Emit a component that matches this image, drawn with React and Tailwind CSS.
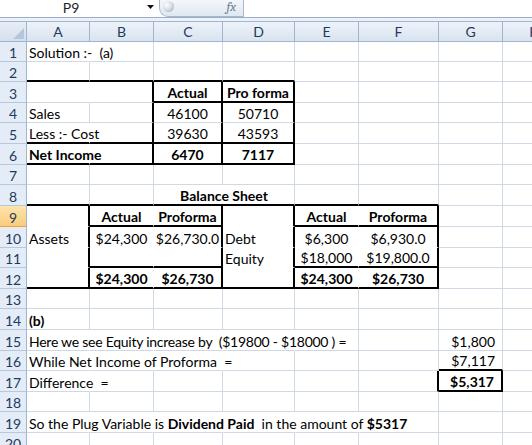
import React from "react";

const cols = [
  { k: "A", w: "w-[63px]", h: "A" },
  { k: "B", w: "w-[64px]", h: "B" },
  { k: "C", w: "w-[69px]", h: "C" },
  { k: "D", w: "w-[72px]", h: "D" },
  { k: "E", w: "w-[64px]", h: "E" },
  { k: "F", w: "w-[80px]", h: "F" },
  { k: "G", w: "w-[64px]", h: "G" },
  { k: "H", w: "w-[64px]", h: "H" },
];

// R / B: "x" = thick black, "n" = gridline hidden
const rows = [
  { n: 1, h: 20, c: { A: { t: "Solution :-  (a)", R: "n" } } },
  { n: 2, h: 20, c: { A: { B: "x" }, B: { B: "x" }, C: { B: "x" }, D: { B: "x" } } },
  { n: 3, h: 21, c: { A: { R: "n" }, B: { R: "x" }, C: { t: "Actual", b: 1, al: "c", R: "x", B: "x" }, D: { t: "Pro forma", b: 1, al: "c", R: "x", B: "x" } } },
  { n: 4, h: 20, c: { A: { t: "Sales" }, B: { R: "x" }, C: { t: "46100", al: "c", R: "x" }, D: { t: "50710", al: "c", R: "x" } } },
  { n: 5, h: 21, c: { A: { t: "Less :- Cost", R: "n", B: "x" }, B: { R: "x", B: "x" }, C: { t: "39630", al: "c", R: "x", B: "x" }, D: { t: "43593", al: "c", R: "x", B: "x" } } },
  { n: 6, h: 21, c: { A: { t: "Net Income", b: 1, R: "n", B: "x" }, B: { R: "x", B: "x" }, C: { t: "6470", b: 1, al: "c", R: "x", B: "x" }, D: { t: "7117", b: 1, al: "c", R: "x", B: "x" } } },
  { n: 7, h: 20, c: {} },
  { n: 8, h: 21, c: { A: { B: "x" }, B: { B: "x" }, C: { t: "Balance Sheet", b: 1, al: "c", merge: 1, B: "x" }, E: { B: "x" }, F: { B: "x" } } },
  { n: 9, h: 21, sel: 1, c: { A: { R: "x", B: "n" }, B: { t: "Actual", b: 1, al: "c", R: "n", B: "x" }, C: { t: "Proforma", b: 1, al: "c", R: "x", B: "x" }, D: { R: "x", B: "n" }, E: { t: "Actual", b: 1, al: "c", R: "n", B: "x" }, F: { t: "Proforma", b: 1, al: "c", R: "x", B: "x" } } },
  { n: 10, h: 21, c: { A: { t: "Assets", R: "x", B: "n" }, B: { t: "$24,300", al: "c", R: "n", B: "n" }, C: { t: "$26,730.0", al: "c", R: "x", B: "n" }, D: { t: "Debt", R: "x", B: "n" }, E: { t: "$6,300", al: "c", R: "n", B: "n" }, F: { t: "$6,930.0", al: "c", R: "x", B: "n" } } },
  { n: 11, h: 20, c: { A: { R: "x", B: "n" }, B: { R: "n", B: "x" }, C: { R: "x", B: "x" }, D: { t: "Equity", R: "x", B: "n" }, E: { t: "$18,000", al: "c", R: "n", B: "x" }, F: { t: "$19,800.0", al: "c", R: "x", B: "x" } } },
  { n: 12, h: 21, c: { A: { R: "x", B: "x" }, B: { t: "$24,300", b: 1, al: "c", R: "n", B: "x" }, C: { t: "$26,730", b: 1, al: "c", R: "x", B: "x" }, D: { R: "x", B: "x" }, E: { t: "$24,300", b: 1, al: "c", R: "n", B: "x" }, F: { t: "$26,730", b: 1, al: "c", R: "x", B: "x" } } },
  { n: 13, h: 20, c: {} },
  { n: 14, h: 21, c: { A: { t: "(b)", b: 1 } } },
  { n: 15, h: 21, c: { A: { t: "Here we see Equity increase by  ($19800 - $18000 ) =", R: "n", tight: 1 }, B: { R: "n" }, C: { R: "n" }, D: { R: "n" }, G: { t: "$1,800", al: "r" } } },
  { n: 16, h: 20, c: { A: { t: "While Net Income of Proforma  =", R: "n" }, B: { R: "n" }, C: { R: "n" }, G: { t: "$7,117", al: "r", B: "x" } } },
  { n: 17, h: 21, c: { A: { t: "Difference  =", R: "n" }, F: { R: "x" }, G: { t: "$5,317", b: 1, al: "r", R: "x", B: "x" } } },
  { n: 18, h: 20, c: {} },
  {
    n: 19,
    h: 21,
    c: {
      A: {
        t: (
          <>
            So the Plug Variable is <b>Dividend Paid</b>
            {"  in the amount of "}
            <b>$5317</b>
          </>
        ),
        R: "n",
      },
      B: { R: "n" },
      C: { R: "n" },
      D: { R: "n" },
      E: { R: "n" },
    },
  },
  { n: 20, h: 20, c: {} },
];

function Cell({ col, s }) {
  const right =
    s.R === "x"
      ? "border-r-2 border-r-black"
      : s.R === "n"
      ? "border-r border-r-transparent"
      : "border-r border-r-[#d0d7e5]";
  const bottom =
    s.B === "x"
      ? "border-b-2 border-b-black"
      : s.B === "n"
      ? "border-b border-b-transparent"
      : "border-b border-b-[#d0d7e5]";
  const align =
    s.al === "c" ? "justify-center" : s.al === "r" ? "justify-end pr-[7px]" : "justify-start pl-[2px]";
  const width = s.merge ? "w-[141px]" : col.w;
  return (
    <div className={`${width} shrink-0 h-full flex items-end ${align} ${right} ${bottom}`}>
      {s.t !== undefined && (
        <span
          className={`whitespace-pre leading-[17px] ${s.b ? "font-bold" : ""} ${
            s.tight ? "tracking-[-0.25px]" : ""
          }`}
        >
          {s.t}
        </span>
      )}
    </div>
  );
}

function Row({ r }) {
  const out = [];
  let skip = false;
  cols.forEach((col) => {
    if (skip) {
      skip = false;
      return;
    }
    const s = r.c[col.k] || {};
    if (s.merge) skip = true;
    out.push(<Cell key={col.k} col={col} s={s} />);
  });
  return (
    <div className={`flex shrink-0 ${r.h === 21 ? "h-[21px]" : "h-[20px]"}`}>
      <div
        className={`w-[27px] shrink-0 flex items-end justify-center border-r border-r-[#9eb6ce] border-b ${
          r.sel
            ? "bg-linear-to-b from-[#fde4ad] to-[#f9cc7d] border-b-[#f2a33d]"
            : "bg-[#e4ecf7] border-b-[#b7c8dd]"
        } text-[#1e3b5e] leading-[17px]`}
      >
        {r.n}
      </div>
      {out}
    </div>
  );
}

export default function App() {
  return (
    <div
      className="w-[532px] h-[445px] overflow-hidden bg-white text-[14px] text-black flex flex-col"
      style={{ fontFamily: "Lato, 'Liberation Sans', sans-serif" }}
    >
      {/* formula bar */}
      <div className="h-[18px] shrink-0 flex border-b border-b-[#9aaec6] bg-white">
        <div className="w-[142px] shrink-0 flex items-center justify-center text-[14px] text-[#1e1e1e] pb-[2px]">P9</div>
        <div className="w-[17px] shrink-0 flex items-center justify-center pb-[3px]">
          <svg width="7" height="4" viewBox="0 0 7 4">
            <path d="M0 0 H7 L3.5 4 Z" fill="#111" />
          </svg>
        </div>
        <div className="w-[84px] shrink-0 h-[17px] rounded-bl-[9px] border-l border-b border-l-[#a7b9cf] border-b-[#a7b9cf] bg-linear-to-b from-[#f4f7fb] to-[#dfe7f1] flex items-start justify-between pl-[3px] pr-[7px]">
          <div className="w-[11px] h-[11px] mt-[1px] rounded-full bg-radial-[at_35%_35%] from-[#ffffff] via-[#d8dbe0] to-[#9aa1aa]" />
          <span className="italic text-[13px] leading-[14px] text-[#6e7b8c] font-serif">fx</span>
        </div>
        <div className="flex-1 border-l border-l-[#a7b9cf]" />
      </div>
      <div className="h-[3px] shrink-0 bg-[#eef2f8]" />
      {/* column headers */}
      <div className="flex h-[21px] shrink-0 border-t border-t-[#9eb6ce]">
        <div className="w-[27px] shrink-0 bg-linear-to-b from-[#e6edf6] to-[#d5e0ed] border-r border-r-[#9eb6ce] border-b border-b-[#9eb6ce] flex items-end justify-end p-[2px]">
          <svg width="11" height="11" viewBox="0 0 11 11">
            <path d="M11 0 V11 H0 Z" fill="#b5c6db" />
          </svg>
        </div>
        {cols.map((col) => (
          <div
            key={col.k}
            className={`${col.w} shrink-0 flex items-center justify-center bg-linear-to-b from-[#eef3fa] to-[#d9e3ef] border-r border-r-[#9eb6ce] border-b border-b-[#9eb6ce] text-[#1e3b5e]`}
          >
            {col.h}
          </div>
        ))}
      </div>
      {rows.map((r) => (
        <Row key={r.n} r={r} />
      ))}
    </div>
  );
}
